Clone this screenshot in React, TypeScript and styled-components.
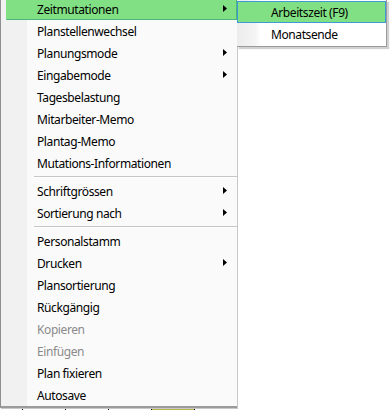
import styled, { createGlobalStyle } from "styled-components";

const Global = createGlobalStyle`
  html, body { margin: 0; padding: 0; background: #ffffff; }
  body { font-family: "Noto Sans", "Open Sans", "Liberation Sans", sans-serif; }
`;

const Screen = styled.div`
  position: relative;
  width: 392px;
  height: 410px;
  overflow: hidden;
  background: #ffffff;
  display: flex;
  flex-direction: column;
  justify-content: flex-end;
`;

const GridStrip = styled.div`
  display: flex;
  height: 3px;
  padding-left: 22px;
`;

const GridCell = styled.div<{ $fill?: string }>`
  width: 42px;
  border-left: 1px solid #000;
  background: ${(p) => p.$fill ?? "#ffffff"};
`;

const Menu = styled.div`
  position: absolute;
  left: 0;
  top: -2px;
  width: 235px;
  display: flex;
  flex-direction: column;
  background: linear-gradient(90deg, #f1f1f1 0, #f1f1f1 25px, #e6e6e6 25px, #fafafa 26px);
  border-left: 1px solid #8e8e8e;
  border-bottom: 2px solid #9b9b9b;
  box-shadow: 1px 1px 0 #c8c8c8;
  padding-left: 1px;
`;

const Item = styled.div<{ $active?: boolean; $disabled?: boolean }>`
  position: relative;
  height: 22px;
  box-sizing: border-box;
  margin-left: 4px;
  padding-left: 30px;
  display: flex;
  align-items: center;
  font-size: 12px;
  letter-spacing: -0.4px;
  color: ${(p) => (p.$disabled ? "#8a8a8a" : "#000000")};
  background: ${(p) => (p.$active ? "#82e084" : "transparent")};
  border: 1px solid ${(p) => (p.$active ? "#4fb47c" : "transparent")};
  border-top-color: ${(p) => (p.$active ? "#82e084" : "transparent")};
  border-left-color: ${(p) => (p.$active ? "#82e084" : "transparent")};
  white-space: nowrap;
`;

const Arrow = styled.svg`
  position: absolute;
  right: 9px;
  top: 6px;
`;

const Separator = styled.div`
  height: 6px;
  margin-left: 32px;
  display: flex;
  flex-direction: column;
  justify-content: center;
  &::before {
    content: "";
    height: 1px;
    background: #c6c6c6;
  }
  &::after {
    content: "";
    height: 1px;
    background: #ffffff;
  }
`;

const SubMenu = styled.div`
  position: absolute;
  left: 237px;
  top: 0;
  width: 149px;
  padding: 1px 0 1px 0;
  display: flex;
  flex-direction: column;
  background: linear-gradient(90deg, #ececec 0, #f4f4f4 18px, #ffffff 24px);
  border-right: 1px solid #9a9a9a;
  border-bottom: 1px solid #9a9a9a;
  box-shadow: 2px 2px 1px rgba(0, 0, 0, 0.18);
`;

const SubItem = styled.div<{ $active?: boolean }>`
  height: 22px;
  box-sizing: border-box;
  padding-left: 33px;
  display: flex;
  align-items: center;
  font-size: 12px;
  letter-spacing: -0.4px;
  color: #000000;
  background: ${(p) => (p.$active ? "#82e084" : "transparent")};
  border: 1px solid ${(p) => (p.$active ? "#3d9ad6" : "transparent")};
  white-space: nowrap;
`;

type Entry =
  | { kind: "sep" }
  | { kind: "item"; label: string; sub?: boolean; active?: boolean; disabled?: boolean };

const entries: Entry[] = [
  { kind: "item", label: "Zeitmutationen", sub: true, active: true },
  { kind: "item", label: "Planstellenwechsel" },
  { kind: "item", label: "Planungsmode", sub: true },
  { kind: "item", label: "Eingabemode", sub: true },
  { kind: "item", label: "Tagesbelastung" },
  { kind: "item", label: "Mitarbeiter-Memo" },
  { kind: "item", label: "Plantag-Memo" },
  { kind: "item", label: "Mutations-Informationen" },
  { kind: "sep" },
  { kind: "item", label: "Schriftgrössen", sub: true },
  { kind: "item", label: "Sortierung nach", sub: true },
  { kind: "sep" },
  { kind: "item", label: "Personalstamm" },
  { kind: "item", label: "Drucken", sub: true },
  { kind: "item", label: "Plansortierung" },
  { kind: "item", label: "Rückgängig" },
  { kind: "item", label: "Kopieren", disabled: true },
  { kind: "item", label: "Einfügen", disabled: true },
  { kind: "item", label: "Plan fixieren" },
  { kind: "item", label: "Autosave" },
];

function SubArrow() {
  return (
    <Arrow width="4" height="7" viewBox="0 0 4 7">
      <polygon points="0,0 4,3.5 0,7" fill="#000" />
    </Arrow>
  );
}

export default function App() {
  return (
    <>
      <Global />
      <Screen>
        <GridStrip>
          <GridCell />
          <GridCell />
          <GridCell />
          <GridCell $fill="#b8b44a" />
          <GridCell />
        </GridStrip>

        <Menu>
          {entries.map((e, i) =>
            e.kind === "sep" ? (
              <Separator key={i} />
            ) : (
              <Item key={i} $active={e.active} $disabled={e.disabled}>
                {e.label}
                {e.sub && <SubArrow />}
              </Item>
            )
          )}
        </Menu>

        <SubMenu>
          <SubItem $active>Arbeitszeit (F9)</SubItem>
          <SubItem>Monatsende</SubItem>
        </SubMenu>
      </Screen>
    </>
  );
}
